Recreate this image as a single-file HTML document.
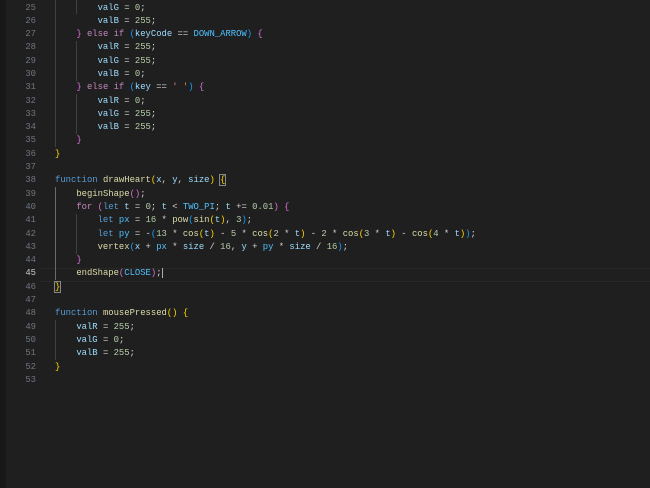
<!DOCTYPE html>
<html><head><meta charset="utf-8"><style>
html,body{margin:0;padding:0;background:#1f1f1f;width:650px;height:488px;overflow:hidden}
.strip{position:absolute;left:0;top:0;width:6px;height:488px;background:#181818}
.ln{position:absolute;left:0;top:1.5px;width:36px;text-align:right;font:8.9px/13.3px "Liberation Mono",monospace;color:#6e7681;white-space:pre}
.ln .a{color:#cccccc}
.code{position:absolute;left:55px;top:1.5px;font:8.9px/13.3px "Liberation Mono",monospace;color:#d4d4d4;white-space:pre}
.k{color:#c586c0}.b{color:#569cd6}.v{color:#9cdcfe}.n{color:#b5cea8}.f{color:#dcdcaa}.c{color:#4fc1ff}.s{color:#ce9178}
.y{color:#ffd700}.p{color:#da70d6}.l{color:#179fff}
.g{position:absolute;width:1px;background:#404040}
.hl{position:absolute;left:40px;top:267.5px;width:610px;height:12.3px;border-top:1px solid #282828;border-bottom:1px solid #282828}
.bx{outline:1px solid #888;}
</style></head><body>
<div class="strip"></div>
<div class="hl"></div>
<div class="g" style="left:55px;top:0;height:147px"></div>
<div class="g" style="left:76px;top:0;height:14px;left:76px"></div>
<div class="g" style="left:76px;top:41px;height:40px"></div>
<div class="g" style="left:76px;top:94px;height:40px"></div>
<div class="g" style="left:55px;top:187px;height:93px;background:#6a6a6a"></div>
<div class="g" style="left:76px;top:214px;height:40px"></div>
<div class="g" style="left:55px;top:320px;height:40px"></div>
<div class="ln">25
26
27
28
29
30
31
32
33
34
35
36
37
38
39
40
41
42
43
44
<span class="a">45</span>
46
47
48
49
50
51
52
53</div>
<div class="code">        <span class="v">valG</span> = <span class="n">0</span>;
        <span class="v">valB</span> = <span class="n">255</span>;
    <span class="p">}</span> <span class="k">else if</span> <span class="l">(</span><span class="v">keyCode</span> == <span class="c">DOWN_ARROW</span><span class="l">)</span> <span class="p">{</span>
        <span class="v">valR</span> = <span class="n">255</span>;
        <span class="v">valG</span> = <span class="n">255</span>;
        <span class="v">valB</span> = <span class="n">0</span>;
    <span class="p">}</span> <span class="k">else if</span> <span class="l">(</span><span class="v">key</span> == <span class="s">' '</span><span class="l">)</span> <span class="p">{</span>
        <span class="v">valR</span> = <span class="n">0</span>;
        <span class="v">valG</span> = <span class="n">255</span>;
        <span class="v">valB</span> = <span class="n">255</span>;
    <span class="p">}</span>
<span class="y">}</span>

<span class="b">function</span> <span class="f">drawHeart</span><span class="y">(</span><span class="v">x</span>, <span class="v">y</span>, <span class="v">size</span><span class="y">)</span> <span class="y bx">{</span>
    <span class="f">beginShape</span><span class="p">()</span>;
    <span class="k">for</span> <span class="p">(</span><span class="b">let</span> <span class="v">t</span> = <span class="n">0</span>; <span class="v">t</span> &lt; <span class="c">TWO_PI</span>; <span class="v">t</span> += <span class="n">0.01</span><span class="p">)</span> <span class="p">{</span>
        <span class="b">let</span> <span class="c">px</span> = <span class="n">16</span> * <span class="f">pow</span><span class="l">(</span><span class="f">sin</span><span class="y">(</span><span class="v">t</span><span class="y">)</span>, <span class="n">3</span><span class="l">)</span>;
        <span class="b">let</span> <span class="c">py</span> = -<span class="l">(</span><span class="n">13</span> * <span class="f">cos</span><span class="y">(</span><span class="v">t</span><span class="y">)</span> - <span class="n">5</span> * <span class="f">cos</span><span class="y">(</span><span class="n">2</span> * <span class="v">t</span><span class="y">)</span> - <span class="n">2</span> * <span class="f">cos</span><span class="y">(</span><span class="n">3</span> * <span class="v">t</span><span class="y">)</span> - <span class="f">cos</span><span class="y">(</span><span class="n">4</span> * <span class="v">t</span><span class="y">)</span><span class="l">)</span>;
        <span class="f">vertex</span><span class="l">(</span><span class="v">x</span> + <span class="c">px</span> * <span class="v">size</span> / <span class="n">16</span>, <span class="v">y</span> + <span class="c">py</span> * <span class="v">size</span> / <span class="n">16</span><span class="l">)</span>;
    <span class="p">}</span>
    <span class="f">endShape</span><span class="p">(</span><span class="c">CLOSE</span><span class="p">)</span>;<span style="border-left:1px solid #aeafad"></span>
<span class="y bx">}</span>

<span class="b">function</span> <span class="f">mousePressed</span><span class="y">()</span> <span class="y">{</span>
    <span class="v">valR</span> = <span class="n">255</span>;
    <span class="v">valG</span> = <span class="n">0</span>;
    <span class="v">valB</span> = <span class="n">255</span>;
<span class="y">}</span>
</div>
</body></html>
